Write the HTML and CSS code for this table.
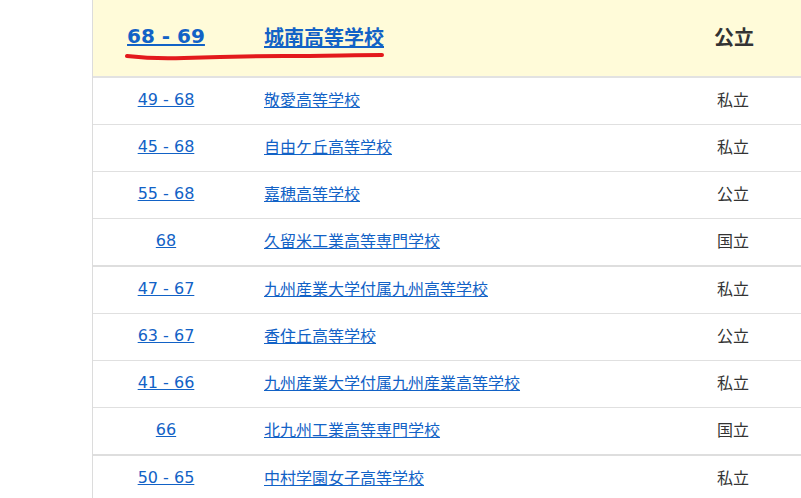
FILE: index.html
```html
<!DOCTYPE html>
<html lang="ja">
<head>
<meta charset="utf-8">
<link rel="stylesheet" href="styles.css">
</head>
<body>
<div class="page">
  <div class="table">
    <div class="row head">
      <div class="c1"><a href="#">68 - 69</a></div>
      <div class="c2"><a href="#">城南高等学校</a></div>
      <div class="c3">公立</div>
      <svg class="mark" width="270" height="14" viewBox="0 0 270 14">
        <path d="M3 5 C 20 7, 35 8, 60 7 C 85 6, 110 5, 160 5 C 200 5, 230 4, 258 4" fill="none" stroke="#e3191c" stroke-width="4" stroke-linecap="round"/>
      </svg>
    </div>
    <div class="row"><div class="c1"><a href="#">49 - 68</a></div><div class="c2"><a href="#">敬愛高等学校</a></div><div class="c3">私立</div></div>
    <div class="row"><div class="c1"><a href="#">45 - 68</a></div><div class="c2"><a href="#">自由ケ丘高等学校</a></div><div class="c3">私立</div></div>
    <div class="row"><div class="c1"><a href="#">55 - 68</a></div><div class="c2"><a href="#">嘉穂高等学校</a></div><div class="c3">公立</div></div>
    <div class="row end"><div class="c1"><a href="#">68</a></div><div class="c2"><a href="#">久留米工業高等専門学校</a></div><div class="c3">国立</div></div>
    <div class="row"><div class="c1"><a href="#">47 - 67</a></div><div class="c2"><a href="#">九州産業大学付属九州高等学校</a></div><div class="c3">私立</div></div>
    <div class="row"><div class="c1"><a href="#">63 - 67</a></div><div class="c2"><a href="#">香住丘高等学校</a></div><div class="c3">公立</div></div>
    <div class="row"><div class="c1"><a href="#">41 - 66</a></div><div class="c2"><a href="#">九州産業大学付属九州産業高等学校</a></div><div class="c3">私立</div></div>
    <div class="row end"><div class="c1"><a href="#">66</a></div><div class="c2"><a href="#">北九州工業高等専門学校</a></div><div class="c3">国立</div></div>
    <div class="row"><div class="c1"><a href="#">50 - 65</a></div><div class="c2"><a href="#">中村学園女子高等学校</a></div><div class="c3">私立</div></div>
  </div>
</div>
</body>
</html>
```

FILE: styles.css
```css
html, body {
  margin: 0;
  padding: 0;
  background: #fff;
  overflow: hidden;
}
body {
  font-family: "DejaVu Sans", "Noto Sans CJK JP", sans-serif;
  font-size: 16px;
  color: #333;
}
.page {
  padding-left: 92px;
  height: 498px;
}
.table {
  border-left: 1px solid #dcdcdc;
  height: 100%;
}
.row {
  display: grid;
  grid-template-columns: 146px 1fr 136px;
  align-items: center;
  height: 42px;
  padding-bottom: 4px;
  border-bottom: 1px solid #e0e0e0;
}
.row.end {
  border-bottom: 2px solid #dedede;
}
.row.head {
  position: relative;
  height: 72px;
  background: #fffbd9;
  border-bottom: 2px solid #e2e2e2;
  font-size: 20px;
  font-weight: bold;
}
.c1 {
  text-align: center;
}
.c2 {
  padding-left: 25px;
}
.c3 {
  text-align: center;
}
a {
  color: #1262c6;
  text-decoration: underline;
}
.head .c3 {
  color: #333;
  padding-left: 2px;
}
.mark {
  position: absolute;
  left: 31px;
  top: 51px;
}
```
